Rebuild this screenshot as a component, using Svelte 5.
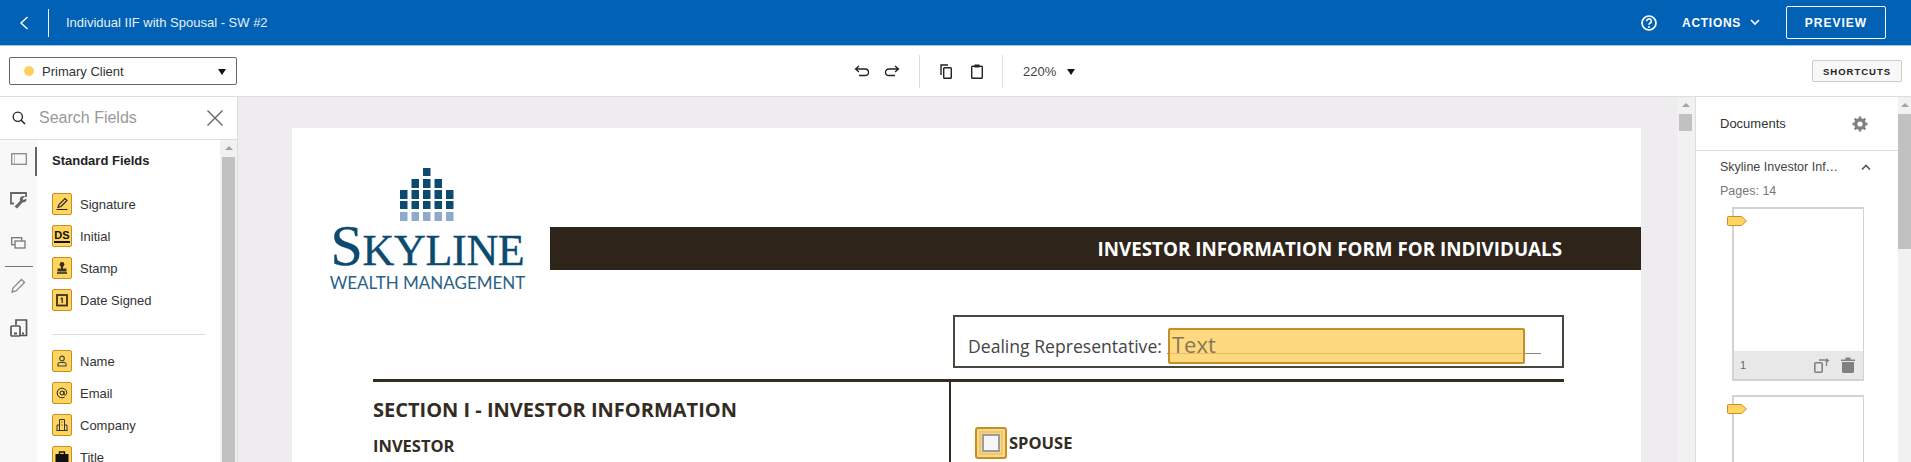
<script>
  const signing = [
    { label: 'Signature', icon: 'pen' },
    { label: 'Initial', icon: 'ds' },
    { label: 'Stamp', icon: 'stamp' },
    { label: 'Date Signed', icon: 'date' }
  ];
  const details = [
    { label: 'Name', icon: 'person' },
    { label: 'Email', icon: 'at' },
    { label: 'Company', icon: 'company' },
    { label: 'Title', icon: 'case' }
  ];
  const logoRows = [
    { y: 0, cols: [2], fill: '#0d4a70', h: 8 },
    { y: 11, cols: [1, 2, 3], fill: '#0d4a70', h: 9 },
    { y: 22, cols: [0, 1, 2, 3, 4], fill: '#0d4a70', h: 9 },
    { y: 33, cols: [0, 1, 2, 3, 4], fill: '#0d4a70', h: 8 },
    { y: 44, cols: [0, 1, 2, 3, 4], fill: '#8fa9cf', h: 9 }
  ];
</script>

{#snippet fieldIcon(icon)}
  <span class="field-icon">
    {#if icon === 'ds'}
      <span class="ds">DS</span>
    {:else}
      <svg viewBox="0 0 16 16" width="16" height="16">
        {#if icon === 'pen'}
          <path d="M4 11.5 L5 8.5 L11 2.5 L13 4.5 L7 10.5 Z M2.5 13.5 H13.5" fill="none" stroke="#222" stroke-width="1.1" />
        {:else if icon === 'stamp'}
          <circle cx="8" cy="4.5" r="2.4" fill="#3a3020" />
          <path d="M7 6 H9 V8.5 H12.5 V11.5 H3.5 V8.5 H7 Z" fill="#3a3020" />
          <path d="M3 13 H13" stroke="#222" stroke-width="1.5" />
        {:else if icon === 'date'}
          <rect x="3" y="3" width="10" height="10.5" fill="none" stroke="#3a3020" stroke-width="1.8" />
          <path d="M8.2 5.8 V11 M6.8 7 L8.2 5.8" stroke="#222" stroke-width="1.2" fill="none" />
        {:else if icon === 'person'}
          <circle cx="8" cy="5.5" r="2.3" fill="none" stroke="#444" stroke-width="1.2" />
          <path d="M4 13 V11 Q4 9.5 6 9.5 H10 Q12 9.5 12 11 V13 Z" fill="none" stroke="#444" stroke-width="1.2" />
        {:else if icon === 'at'}
          <circle cx="8" cy="8" r="2" fill="none" stroke="#222" stroke-width="1" />
          <path d="M10 6 V9 Q10 10.4 11.4 10 Q12.9 9.4 12.7 7.4 A4.8 4.8 0 1 0 10.6 12" fill="none" stroke="#222" stroke-width="1" />
        {:else if icon === 'company'}
          <path d="M5.5 13.5 V2.5 H10.5 V13.5 M3 13.5 V8 H5.5 M10.5 8 H13 V13.5 M2.5 13.5 H13.5 M7.5 5 H8.5 M7.5 8 H8.5" fill="none" stroke="#333" stroke-width="1" />
        {:else if icon === 'case'}
          <path d="M5.5 5 V3 H10.5 V5" fill="none" stroke="#111" stroke-width="1.4" />
          <rect x="1.5" y="5" width="13" height="9" fill="#111" />
        {/if}
      </svg>
    {/if}
  </span>
{/snippet}

{#snippet tag()}
  <svg class="tag" viewBox="0 0 20 10" width="20" height="10">
    <path d="M1.5 .5 H14.5 L19.5 5 L14.5 9.5 H1.5 Q.5 9.5 .5 8.5 V1.5 Q.5 .5 1.5 .5 Z" fill="#ffd55f" stroke="#c58e27" />
  </svg>
{/snippet}

<div class="app">
  <header class="topbar">
    <button class="back" aria-label="Back">
      <svg viewBox="0 0 10 14" width="10" height="14"><path d="M8.5 1 L2 7 L8.5 13" fill="none" stroke="#fff" stroke-width="1.4" /></svg>
    </button>
    <span class="title">Individual IIF with Spousal - SW #2</span>
    <svg class="help" viewBox="0 0 18 18" width="18" height="18">
      <circle cx="9" cy="9" r="7" fill="none" stroke="#fff" stroke-width="1.7" />
      <path d="M6.7 7.2 A2.3 2.2 0 1 1 9.8 9.2 Q9 9.6 9 10.8" fill="none" stroke="#fff" stroke-width="1.6" />
      <circle cx="9" cy="13" r="1" fill="#fff" />
    </svg>
    <span class="actions">ACTIONS</span>
    <svg class="actions-caret" viewBox="0 0 10 7" width="10" height="7"><path d="M1 1 L5 5 L9 1" fill="none" stroke="#fff" stroke-width="1.7" /></svg>
    <button class="preview">PREVIEW</button>
  </header>

  <div class="toolbar">
    <div class="recipient">
      <span class="dot"></span>
      <span class="recipient-name">Primary Client</span>
      <span class="caret"></span>
    </div>
    <div class="tools">
      <svg class="undo" viewBox="0 0 16 12" width="16" height="12"><path d="M5 1 L1.5 4 L5 7 M1.5 4 H11 Q14.5 4 14.5 7.5 Q14.5 10.5 11 10.5 H5" fill="none" stroke="#222" stroke-width="1.3" /></svg>
      <svg class="redo" viewBox="0 0 16 12" width="16" height="12"><path d="M11 1 L14.5 4 L11 7 M14.5 4 H5 Q1.5 4 1.5 7.5 Q1.5 10.5 5 10.5 H11" fill="none" stroke="#222" stroke-width="1.3" /></svg>
      <span class="tool-sep"></span>
      <svg class="copy" viewBox="0 0 12 15" width="12" height="15"><path d="M1 11 V1 H8" fill="none" stroke="#222" stroke-width="1.4" /><rect x="3.7" y="3.7" width="7.6" height="10.6" rx=".8" fill="none" stroke="#222" stroke-width="1.4" /></svg>
      <svg class="paste" viewBox="0 0 12 15" width="12" height="15"><rect x=".7" y="2.2" width="10.6" height="12.1" rx=".8" fill="none" stroke="#222" stroke-width="1.4" /><rect x="3.5" y=".5" width="5" height="3" fill="#222" /></svg>
      <span class="tool-sep"></span>
      <span class="zoom">220%</span>
      <span class="caret zoom-caret"></span>
    </div>
    <button class="shortcuts">SHORTCUTS</button>
  </div>

  <div class="workspace">
    <aside class="left">
      <div class="search">
        <svg viewBox="0 0 16 16" width="16" height="16"><circle cx="6.8" cy="6.8" r="4.6" fill="none" stroke="#222" stroke-width="1.3" /><path d="M10.2 10.2 L14 14" stroke="#222" stroke-width="1.5" /></svg>
        <span class="search-text">Search Fields</span>
        <svg class="close" viewBox="0 0 16 16" width="16" height="16"><path d="M.5 .5 L15.5 15.5 M15.5 .5 L.5 15.5" stroke="#666" stroke-width="1.4" /></svg>
      </div>
      <div class="left-body">
        <nav class="rail">
          <svg viewBox="0 0 16 12" width="16" height="12"><rect x=".7" y=".7" width="14.6" height="10.6" fill="none" stroke="#888" stroke-width="1.3" /><path d="M3.5 1 V11" stroke="#bbb" /></svg>
          <svg viewBox="0 0 18 18" width="18" height="18"><path d="M4 11.5 H1 V1 H16 V5" fill="none" stroke="#666" stroke-width="1.8" /><path d="M15.5 4.5 L12.5 6.5 L13.5 8 L16.5 6.5 Q17 10.5 12.5 10.5 L7 16.5 L4.5 14.5 L10 9 Q9 4.5 13 4 Z" fill="#666" /></svg>
          <svg viewBox="0 0 15 12" width="15" height="12"><rect x=".7" y=".7" width="10" height="7" fill="none" stroke="#777" stroke-width="1.3" /><rect x="4" y="4" width="10" height="7" fill="#f7f7f7" stroke="#777" stroke-width="1.3" /></svg>
          <span class="rail-sep"></span>
          <svg viewBox="0 0 15 15" width="15" height="15"><path d="M1 14 L2 10 L10.5 1.5 L13.5 4.5 L5 13 Z" fill="none" stroke="#888" stroke-width="1.3" /></svg>
          <svg viewBox="0 0 18 18" width="18" height="18"><path d="M6 6 V1 H16.5 V16.5 H10" fill="none" stroke="#555" stroke-width="1.7" /><rect x="1" y="7" width="9" height="10" rx="1" fill="none" stroke="#555" stroke-width="1.7" /><path d="M4 14.5 H7 M12 14.5 H14" stroke="#555" stroke-width="2" /></svg>
        </nav>
        <div class="fields">
          <h3>Standard Fields</h3>
          <ul>
            {#each signing as f}
              <li>{@render fieldIcon(f.icon)}<span>{f.label}</span></li>
            {/each}
          </ul>
          <hr />
          <ul>
            {#each details as f}
              <li>{@render fieldIcon(f.icon)}<span>{f.label}</span></li>
            {/each}
          </ul>
        </div>
        <div class="scrollbar left-scroll"><i></i><b></b></div>
      </div>
    </aside>

    <main class="canvas">
      <div class="page">
        <div class="masthead">
          <div class="logo">
            <svg viewBox="0 0 59 53" width="59" height="53">
              {#each logoRows as row}
                {#each row.cols as c}
                  <rect x={c * 11.5} y={row.y} width="7.5" height={row.h} fill={row.fill} />
                {/each}
              {/each}
            </svg>
            <div class="brand"><span class="cap">S</span>KYLINE</div>
            <div class="brand-sub">WEALTH MANAGEMENT</div>
          </div>
          <div class="band">INVESTOR INFORMATION FORM FOR INDIVIDUALS</div>
        </div>
        <div class="dealing">
          <span>Dealing Representative:</span>
          <span class="dealing-line"></span>
          <div class="text-field">Text</div>
        </div>
        <div class="section">
          <div class="section-left">
            <h2>SECTION I - INVESTOR INFORMATION</h2>
            <h4>INVESTOR</h4>
          </div>
          <div class="section-right">
            <span class="check"><span></span></span>
            <h4>SPOUSE</h4>
          </div>
        </div>
      </div>
      <div class="scrollbar canvas-scroll"><i></i><b></b></div>
    </main>

    <aside class="right">
      <div class="docs">
        <div class="docs-head">
          <span>Documents</span>
          <svg viewBox="0 0 16 16" width="16" height="16">
            <circle cx="8" cy="8" r="4.4" fill="none" stroke="#808080" stroke-width="3" />
            <path d="M8 .5 V15.5 M.5 8 H15.5 M2.7 2.7 L13.3 13.3 M13.3 2.7 L2.7 13.3" stroke="#808080" stroke-width="2.4" />
            <circle cx="8" cy="8" r="2.6" fill="#fff" />
          </svg>
        </div>
        <div class="doc-name">
          <span>Skyline Investor Inf…</span>
          <svg viewBox="0 0 10 7" width="10" height="7"><path d="M1 5.5 L5 1.5 L9 5.5" fill="none" stroke="#555" stroke-width="1.6" /></svg>
        </div>
        <div class="doc-pages">Pages: 14</div>
        <div class="thumb">
          {@render tag()}
          <div class="thumb-foot">
            <span>1</span>
            <svg class="rotate" viewBox="0 0 16 16" width="16" height="16"><rect x=".8" y="5.8" width="7.4" height="9.4" rx="1" fill="none" stroke="#808080" stroke-width="1.6" /><path d="M5 3 H11 Q12.5 3 12.5 5 V9" fill="none" stroke="#808080" stroke-width="1.3" /><path d="M12 1 L15.5 3.5 L12 6 Z" fill="#808080" /></svg>
            <svg viewBox="0 0 14 16" width="14" height="16"><path d="M0 2.5 H14 V4 H0 Z M4.5 2.5 V.5 H9.5 V2.5 Z M1 5 H13 V14.5 Q13 16 11.5 16 H2.5 Q1 16 1 14.5 Z" fill="#808080" /></svg>
          </div>
        </div>
        <div class="thumb">
          {@render tag()}
        </div>
      </div>
      <div class="scrollbar right-scroll"><i></i><b></b></div>
    </aside>
  </div>
</div>

<style>
  :global(body) {
    margin: 0;
    background: #fff;
  }

  .app {
    height: 100vh;
    display: flex;
    flex-direction: column;
    overflow: hidden;
    font-family: "Liberation Sans", Arial, sans-serif;
    color: #1e1e1e;
  }

  h2, h3, h4, ul, hr {
    margin: 0;
    padding: 0;
  }

  button {
    font-family: inherit;
    cursor: pointer;
  }

  svg {
    display: block;
    flex: none;
  }

  .topbar {
    height: 45px;
    flex: none;
    display: flex;
    align-items: center;
    background: #0061b5;
    color: #fff;
    border-bottom: 1px solid #9fc4e4;
  }

  .back {
    width: 49px;
    height: 28px;
    padding: 0 0 0 19px;
    background: none;
    border: 0;
    border-right: 1px solid #fff;
  }

  .title {
    margin-left: 17px;
    font-size: 13px;
    color: #e6f0f8;
  }

  .help {
    margin-left: auto;
  }

  .actions {
    margin-left: 24px;
    font-size: 12px;
    font-weight: bold;
    letter-spacing: 0.7px;
  }

  .actions-caret {
    margin-left: 9px;
  }

  .preview {
    margin: 0 25px 0 26px;
    width: 100px;
    height: 33px;
    color: #fff;
    background: none;
    border: 1px solid #fff;
    border-radius: 2px;
    font-size: 12px;
    font-weight: bold;
    letter-spacing: 1px;
  }

  .toolbar {
    height: 50px;
    flex: none;
    display: flex;
    align-items: center;
    padding: 0 9px;
    border-bottom: 1px solid #ddd;
  }

  .recipient {
    width: 226px;
    height: 26px;
    display: flex;
    align-items: center;
    border: 1px solid #666;
    border-radius: 2px;
    font-size: 13px;
  }

  .dot {
    width: 10px;
    height: 10px;
    margin-left: 14px;
    border-radius: 50%;
    background: #ffd05f;
  }

  .recipient-name {
    margin-left: 8px;
    color: #333;
  }

  .caret {
    width: 0;
    height: 0;
    margin: 1px 10px 0 auto;
    border: 4px solid transparent;
    border-top: 6px solid #111;
    border-bottom: 0;
  }

  .tools {
    display: flex;
    align-items: center;
    margin-left: 610px;
    height: 34px;
  }

  .undo { margin-left: 7px; }
  .redo { margin-left: 14px; }
  .copy { margin-left: 20px; }
  .paste { margin-left: 19px; }

  .tool-sep {
    width: 1px;
    height: 33px;
    margin-left: 19px;
    background: #ddd;
  }

  .zoom {
    margin-left: 20px;
    font-size: 13px;
    color: #444;
  }

  .zoom-caret {
    margin: 1px 0 0 11px;
  }

  .shortcuts {
    margin-left: auto;
    width: 90px;
    height: 22px;
    padding: 0;
    background: #f8f8f8;
    border: 1px solid #ccc;
    border-radius: 2px;
    color: #222;
    font-size: 9.5px;
    font-weight: bold;
    letter-spacing: 1px;
  }

  .workspace {
    flex: 1;
    min-height: 0;
    display: flex;
  }

  .left {
    width: 237px;
    flex: none;
    display: flex;
    flex-direction: column;
    border-right: 1px solid #ddd;
  }

  .search {
    height: 42px;
    flex: none;
    display: flex;
    align-items: center;
    padding-left: 11px;
    border-bottom: 1px solid #ddd;
  }

  .search-text {
    margin-left: 12px;
    font-size: 16px;
    color: #999;
  }

  .close {
    margin-left: auto;
    margin-right: 14px;
  }

  .left-body {
    flex: 1;
    min-height: 0;
    display: flex;
  }

  .rail {
    position: relative;
    width: 37px;
    flex: none;
    display: flex;
    flex-direction: column;
    align-items: center;
    box-sizing: border-box;
    background: #f8f8f8;
    padding-top: 13px;
  }

  .rail::after {
    content: "";
    position: absolute;
    right: 0;
    top: 7px;
    width: 2px;
    height: 29px;
    background: #666;
  }

  .rail svg:nth-child(2) { margin-top: 27px; }
  .rail svg:nth-child(3) { margin-top: 27px; }
  .rail svg:nth-child(5) { margin-top: 11px; }
  .rail svg:nth-child(6) { margin-top: 26px; }

  .rail-sep {
    width: 28px;
    height: 1px;
    margin-top: 17px;
    background: #777;
  }

  .fields {
    flex: 1;
    min-width: 0;
    padding-left: 15px;
    overflow: hidden;
  }

  .fields h3 {
    margin: 13px 0 24px;
    font-size: 13px;
    line-height: 16px;
    font-weight: bold;
    color: #222;
  }

  .fields ul {
    list-style: none;
    display: flex;
    flex-direction: column;
    gap: 10px;
  }

  .fields li {
    display: flex;
    align-items: center;
    gap: 8px;
    height: 22px;
    font-size: 13px;
    color: #333;
  }

  .fields hr {
    width: 153px;
    height: 1px;
    margin: 23px 0 15px;
    border: 0;
    background: #ddd;
  }

  .field-icon {
    width: 18px;
    height: 20px;
    display: flex;
    align-items: center;
    justify-content: center;
    background: #ffd55f;
    border: 1px solid #c58e27;
    border-radius: 2px;
  }

  .ds {
    font-size: 11px;
    line-height: 12px;
    font-weight: bold;
    color: #111;
    border-bottom: 2px solid #111;
  }

  .scrollbar {
    position: relative;
    flex: none;
    background: #f1f1f1;
  }

  .scrollbar i {
    position: absolute;
    top: 6px;
    left: 50%;
    margin-left: -4px;
    border: 4px solid transparent;
    border-bottom: 4px solid #a3a3a3;
    border-top: 0;
  }

  .scrollbar b {
    position: absolute;
    display: block;
    background: #c1c1c1;
  }

  .left-scroll {
    width: 17px;
  }

  .left-scroll b {
    left: 2px;
    right: 2px;
    top: 17px;
    bottom: 0;
  }

  .canvas {
    flex: 1;
    min-width: 0;
    display: flex;
    background: #eeecee;
  }

  .page {
    width: 1349px;
    height: 700px;
    margin: 31px 36px 0 54px;
    flex: none;
    box-sizing: border-box;
    padding-top: 40px;
    background: #fff;
    font-family: "Open Sans", sans-serif;
    color: #332c23;
  }

  .canvas-scroll {
    width: 18px;
    height: 100%;
  }

  .canvas-scroll b {
    left: 2px;
    right: 3px;
    top: 17px;
    height: 17px;
  }

  .masthead {
    display: flex;
    align-items: flex-start;
    padding-left: 39px;
  }

  .logo {
    width: 193px;
    height: 119px;
    flex: none;
    display: flex;
    flex-direction: column;
    align-items: center;
    font-family: "Liberation Serif", serif;
    color: #0d4a70;
  }

  .logo svg {
    margin-left: 4px;
  }

  .brand {
    margin-top: 4px;
    font-size: 44px;
    line-height: 42px;
    letter-spacing: -0.3px;
    white-space: nowrap;
    -webkit-text-stroke: 0.4px #0d4a70;
  }

  .brand .cap {
    font-size: 58px;
  }

  .brand-sub {
    margin-top: 2px;
    font-family: "Lato", sans-serif;
    font-size: 17px;
    line-height: 17px;
    white-space: nowrap;
    color: #2a6186;
  }

  .band {
    flex: 1;
    height: 43px;
    margin: 59px 0 0 26px;
    padding-right: 79px;
    display: flex;
    align-items: center;
    justify-content: flex-end;
    background: #2e241a;
    color: #fff;
    font-size: 18.8px;
    font-weight: bold;
  }

  .dealing {
    position: relative;
    width: 611px;
    height: 53px;
    margin: 28px 0 0 661px;
    box-sizing: border-box;
    padding: 16px 0 0 13px;
    border: 2px solid #4a463e;
    font-size: 17.6px;
    line-height: 26px;
    color: #444;
  }

  .text-field {
    position: absolute;
    left: 213px;
    top: 11px;
    width: 357px;
    height: 36px;
    box-sizing: border-box;
    padding: 0 2px;
    background: rgba(255, 208, 95, 0.8);
    border: 2px solid #c58e27;
    border-radius: 2px;
    font-size: 22px;
    line-height: 28px;
    color: #85775a;
  }

  .dealing-line {
    position: absolute;
    left: 212px;
    top: 36px;
    width: 374px;
    height: 1px;
    background: #8b8880;
  }

  .section {
    display: flex;
    width: 1191px;
    margin: 11px 0 0 81px;
    border-top: 3px solid #332c23;
  }

  .section-left {
    width: 576px;
    height: 300px;
    flex: none;
    border-right: 2px solid #332c23;
  }

  .section-left h2 {
    margin-top: 13px;
    font-size: 20px;
    line-height: 29px;
    font-weight: bold;
  }

  .section-left h4,
  .section-right h4 {
    font-size: 16.5px;
    line-height: 24px;
    font-weight: bold;
  }

  .section-left h4 {
    margin-top: 10px;
  }

  .section-right {
    display: flex;
    align-items: center;
    gap: 2px;
    height: 32px;
    margin: 45px 0 0 24px;
  }

  .check {
    width: 32px;
    height: 32px;
    box-sizing: border-box;
    display: flex;
    align-items: center;
    justify-content: center;
    background: #fbd980;
    border: 2px solid #c58e27;
    border-radius: 3px;
    outline: 2px solid #e9c877;
    outline-offset: -6px;
  }

  .check span {
    width: 18px;
    height: 18px;
    box-sizing: border-box;
    background: #f6f6f6;
    border: 2px solid #9b9b9b;
  }

  .right {
    width: 216px;
    flex: none;
    display: flex;
    border-left: 1px solid #ddd;
    box-sizing: border-box;
  }

  .docs {
    flex: 1;
    min-width: 0;
    overflow: hidden;
  }

  .docs-head {
    height: 54px;
    display: flex;
    align-items: center;
    justify-content: space-between;
    box-sizing: border-box;
    padding: 0 30px 0 24px;
    border-bottom: 1px solid #ddd;
    font-size: 13px;
    color: #333;
  }

  .doc-name {
    display: flex;
    align-items: center;
    justify-content: space-between;
    margin-top: 7px;
    padding: 0 27px 0 24px;
    height: 18px;
    font-size: 12.5px;
    color: #444;
  }

  .doc-pages {
    margin: 7px 0 0 24px;
    font-size: 12.5px;
    line-height: 16px;
    color: #777;
  }

  .thumb {
    position: relative;
    width: 132px;
    height: 174px;
    margin: 8px 0 14px 36px;
    box-sizing: border-box;
    display: flex;
    align-items: flex-end;
    border: 2px solid #d2d2d2;
    border-width: 2px 1px 2px 2px;
  }

  .tag {
    position: absolute;
    left: -7px;
    top: 7px;
  }

  .thumb-foot {
    flex: 1;
    height: 28px;
    display: flex;
    align-items: center;
    padding: 0 8px 0 6px;
    background: #e8e8e8;
    font-size: 11px;
    color: #666;
  }

  .thumb-foot .rotate {
    margin-left: auto;
    margin-right: 11px;
  }

  .right-scroll {
    width: 13px;
  }

  .right-scroll b {
    left: 0;
    right: 0;
    top: 17px;
    height: 135px;
  }
</style>
